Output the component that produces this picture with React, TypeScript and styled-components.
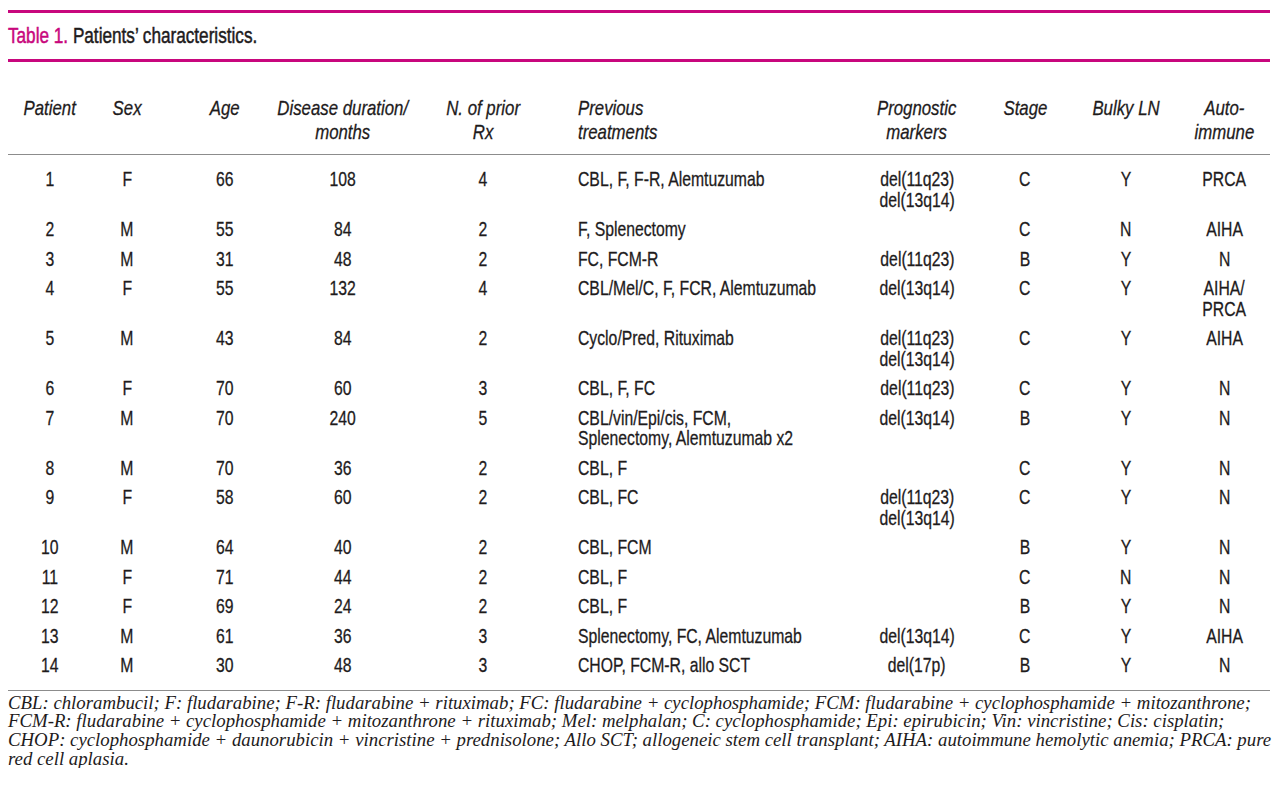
import React from 'react';
import styled, { createGlobalStyle } from 'styled-components';

const GlobalStyle = createGlobalStyle`
  html, body {
    margin: 0;
    padding: 0;
    background: #ffffff;
  }
  body {
    font-family: 'Liberation Sans', Arial, sans-serif;
    color: #1e1b1c;
  }
`;

const PINK = '#c8077d';

const Page = styled.div`
  padding: 10px 10px 0 8px;
  width: 1262px;
`;

const PinkRule = styled.div`
  height: 3px;
  background: ${PINK};
`;

// the print face is a condensed grotesque; squeeze Arial-metric text to match.
// equal negative margins keep wide labels centred in narrow columns
const Squeeze = styled.span<{ $origin?: string; $scale?: number }>`
  display: inline-block;
  white-space: nowrap;
  margin: ${(p) => (p.$origin === 'left' ? '0 -60px 0 0' : '0 -60px')};
  transform: scaleX(${(p) => p.$scale || 0.75});
  transform-origin: ${(p) => p.$origin || 'center'} top;
  -webkit-text-stroke: 0.3px currentColor;
`;

const Caption = styled.div`
  height: 46px;
  display: flex;
  align-items: center;
  font-size: 22px;
  span span {
    color: ${PINK};
  }
  & > span {
    -webkit-text-stroke: 0.5px currentColor;
  }
`;

const Table = styled.table`
  width: 1262px;
  table-layout: fixed;
  border-collapse: collapse;
  font-size: 21px;
`;

const HeadCell = styled.th<{ $align?: string }>`
  font-weight: normal;
  font-style: italic;
  font-size: 21px;
  line-height: 24px;
  text-align: ${(p) => p.$align || 'center'};
  vertical-align: top;
  white-space: nowrap;
  padding: 34px 0 10px ${(p) => (p.$align === 'left' ? '10px' : '0')};
  border-bottom: 1.5px solid #8c8c8c;
`;

const Cell = styled.td<{ $align?: string }>`
  text-align: ${(p) => p.$align || 'center'};
  vertical-align: top;
  line-height: 20.5px;
  padding: 4.75px 0 4.25px ${(p) => (p.$align === 'left' ? '10px' : '0')};
  white-space: nowrap;
`;

const Row = styled.tr`
  &:first-child td {
    padding-top: 14px;
  }
  &:last-child td {
    padding-bottom: 14px;
  }
`;

const Footnote = styled.div`
  border-top: 1.5px solid #8c8c8c;
  padding-top: 3px;
  font-family: 'Liberation Serif', 'DejaVu Serif', serif;
  font-style: italic;
  font-size: 18.8px;
  line-height: 18.7px;
  div {
    white-space: nowrap;
  }
`;

const columns = [
  { label: ['Patient'], width: 84 },
  { label: ['Sex'], width: 70 },
  { label: ['Age'], width: 126 },
  { label: ['Disease duration/', 'months'], width: 110 },
  { label: ['N. of prior', 'Rx'], width: 170 },
  { label: ['Previous', 'treatments'], width: 289, align: 'left' },
  { label: ['Prognostic', 'markers'], width: 120 },
  { label: ['Stage'], width: 96 },
  { label: ['Bulky LN'], width: 106 },
  { label: ['Auto-', 'immune'], width: 91 }
];

const rows: string[][][] = [
  [['1'], ['F'], ['66'], ['108'], ['4'], ['CBL, F, F-R, Alemtuzumab'], ['del(11q23)', 'del(13q14)'], ['C'], ['Y'], ['PRCA']],
  [['2'], ['M'], ['55'], ['84'], ['2'], ['F, Splenectomy'], [], ['C'], ['N'], ['AIHA']],
  [['3'], ['M'], ['31'], ['48'], ['2'], ['FC, FCM-R'], ['del(11q23)'], ['B'], ['Y'], ['N']],
  [['4'], ['F'], ['55'], ['132'], ['4'], ['CBL/Mel/C, F, FCR, Alemtuzumab'], ['del(13q14)'], ['C'], ['Y'], ['AIHA/', 'PRCA']],
  [['5'], ['M'], ['43'], ['84'], ['2'], ['Cyclo/Pred, Rituximab'], ['del(11q23)', 'del(13q14)'], ['C'], ['Y'], ['AIHA']],
  [['6'], ['F'], ['70'], ['60'], ['3'], ['CBL, F, FC'], ['del(11q23)'], ['C'], ['Y'], ['N']],
  [['7'], ['M'], ['70'], ['240'], ['5'], ['CBL/vin/Epi/cis, FCM,', 'Splenectomy, Alemtuzumab x2'], ['del(13q14)'], ['B'], ['Y'], ['N']],
  [['8'], ['M'], ['70'], ['36'], ['2'], ['CBL, F'], [], ['C'], ['Y'], ['N']],
  [['9'], ['F'], ['58'], ['60'], ['2'], ['CBL, FC'], ['del(11q23)', 'del(13q14)'], ['C'], ['Y'], ['N']],
  [['10'], ['M'], ['64'], ['40'], ['2'], ['CBL, FCM'], [], ['B'], ['Y'], ['N']],
  [['11'], ['F'], ['71'], ['44'], ['2'], ['CBL, F'], [], ['C'], ['N'], ['N']],
  [['12'], ['F'], ['69'], ['24'], ['2'], ['CBL, F'], [], ['B'], ['Y'], ['N']],
  [['13'], ['M'], ['61'], ['36'], ['3'], ['Splenectomy, FC, Alemtuzumab'], ['del(13q14)'], ['C'], ['Y'], ['AIHA']],
  [['14'], ['M'], ['30'], ['48'], ['3'], ['CHOP, FCM-R, allo SCT'], ['del(17p)'], ['B'], ['Y'], ['N']]
];

const notes = [
  'CBL: chlorambucil; F: fludarabine; F-R: fludarabine + rituximab; FC: fludarabine + cyclophosphamide; FCM: fludarabine + cyclophosphamide + mitozanthrone;',
  'FCM-R: fludarabine + cyclophosphamide + mitozanthrone + rituximab; Mel: melphalan; C: cyclophosphamide; Epi: epirubicin; Vin: vincristine; Cis: cisplatin;',
  'CHOP: cyclophosphamide + daunorubicin + vincristine + prednisolone; Allo SCT; allogeneic stem cell transplant; AIHA: autoimmune hemolytic anemia; PRCA: pure',
  'red cell aplasia.'
];

const lines = (parts: string[]) =>
  parts.map((line, i) => (
    <React.Fragment key={i}>
      {i > 0 && <br />}
      {line}
    </React.Fragment>
  ));

const App = () => (
  <Page>
    <GlobalStyle />
    <PinkRule />
    <Caption>
      <Squeeze $origin="left" $scale={0.78}>
        <span>Table 1.</span> Patients’ characteristics.
      </Squeeze>
    </Caption>
    <PinkRule />
    <Table>
      <colgroup>
        {columns.map((col, i) => (
          <col key={i} style={{ width: col.width }} />
        ))}
      </colgroup>
      <thead>
        <tr>
          {columns.map((col, i) => (
            <HeadCell key={i} $align={col.align}>
              <Squeeze $origin={col.align} $scale={0.8}>
                {lines(col.label)}
              </Squeeze>
            </HeadCell>
          ))}
        </tr>
      </thead>
      <tbody>
        {rows.map((row, r) => (
          <Row key={r}>
            {row.map((cell, c) => (
              <Cell key={c} $align={columns[c].align}>
                {cell.length > 0 && <Squeeze $origin={columns[c].align}>{lines(cell)}</Squeeze>}
              </Cell>
            ))}
          </Row>
        ))}
      </tbody>
    </Table>
    <Footnote>
      {notes.map((n) => (
        <div key={n}>{n}</div>
      ))}
    </Footnote>
  </Page>
);

export default App;
